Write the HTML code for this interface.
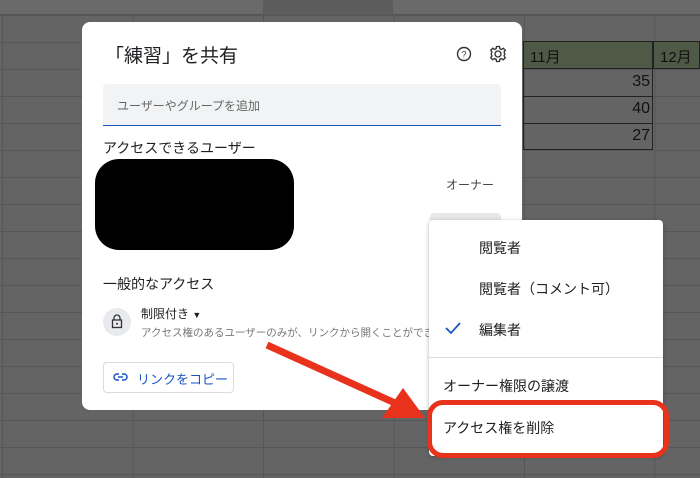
<!DOCTYPE html>
<html><head><meta charset="utf-8"><style>
*{margin:0;padding:0;box-sizing:border-box}
body{width:700px;height:478px;overflow:hidden;position:relative;background:#646464;font-family:"Liberation Sans","Noto Sans CJK JP",sans-serif;}
.grid{position:absolute;inset:0;background-image:linear-gradient(to bottom,#575757 1px,transparent 1px),linear-gradient(to right,#575757 1px,transparent 1px);background-size:100% 27px,130.5px 100%;background-position:0 15px,2px 0}
.abs{position:absolute}
</style></head><body>
<div class="grid"></div>
<div class="abs" style="left:0;top:0;width:700px;height:15px;background:#6a6a6a;border-bottom:1px solid #555"></div>
<div class="abs" style="left:263px;top:0;width:130px;height:15px;background:#5c5c5c"></div>
<div class="abs" style="left:523px;top:41px;width:130px;height:28px;background:#4e5a45;border:1px solid #222;color:#111;font-size:15px;padding:4px 0 0 6px">11月</div>
<div class="abs" style="left:653px;top:41px;width:47px;height:28px;background:#4e5a45;border:1px solid #222;color:#111;font-size:15px;padding:4px 0 0 6px">12月</div>
<div class="abs" style="left:523px;top:69px;width:130px;height:81px;border:1px solid #222;border-top:none"></div>
<div class="abs" style="left:523px;top:96px;width:130px;height:1px;background:#222"></div>
<div class="abs" style="left:523px;top:123px;width:130px;height:1px;background:#222"></div>
<div class="abs" style="left:600px;top:73px;width:50px;text-align:right;color:#111;font-size:16px">35</div>
<div class="abs" style="left:600px;top:100px;width:50px;text-align:right;color:#111;font-size:16px">40</div>
<div class="abs" style="left:600px;top:127px;width:50px;text-align:right;color:#111;font-size:16px">27</div>

<div class="abs" style="left:82px;top:22px;width:440px;height:388px;background:#fff;border-radius:8px"></div>
<div class="abs" style="left:105px;top:41px;font-size:19px;color:#202124">「練習」を共有</div>
<svg class="abs" style="left:455px;top:45px" width="18" height="18" viewBox="0 0 18 18"><circle cx="9" cy="9" r="6.5" fill="none" stroke="#333" stroke-width="1.4"/><text x="9" y="12.5" font-size="9" text-anchor="middle" fill="#333" font-family="Liberation Sans">?</text></svg>
<svg class="abs" style="left:489px;top:45px" width="18" height="18" viewBox="0 0 24 24"><path d="M12 8a4 4 0 100 8 4 4 0 000-8z M10 2h4l.5 3 2 1 2.5-1.7 2.8 2.8L20 9.5l1 2v1l-1 2 1.7 2.5-2.8 2.8L16.5 18l-2 1-.5 3h-4l-.5-3-2-1-2.5 1.7-2.8-2.8L4 14.5l-1-2v-1l1-2L2.3 7 5.1 4.2 7.5 6l2-1z" fill="none" stroke="#333" stroke-width="1.8"/></svg>
<div class="abs" style="left:103px;top:84px;width:398px;height:42px;background:#f1f3f4;border-radius:4px 4px 0 0;border-bottom:1.5px solid #1a56c4;font-size:12px;color:#666;padding:13px 0 0 14px">ユーザーやグループを追加</div>
<div class="abs" style="left:103px;top:138px;font-size:14px;color:#202124">アクセスできるユーザー</div>
<div class="abs" style="left:95px;top:159px;width:199px;height:91px;background:#000;border-radius:24px"></div>
<div class="abs" style="left:446px;top:176px;font-size:12px;color:#444">オーナー</div>
<div class="abs" style="left:430px;top:213px;width:71px;height:10px;background:#e8e8e8;border-radius:4px"></div>
<div class="abs" style="left:103px;top:274px;font-size:14px;color:#202124">一般的なアクセス</div>
<div class="abs" style="left:103px;top:308px;width:28px;height:28px;border-radius:50%;background:#e8eaed"></div>
<svg class="abs" style="left:110px;top:313px" width="14" height="16" viewBox="0 0 14 16"><path d="M4 7V5a3 3 0 016 0v2" fill="none" stroke="#333" stroke-width="1.3"/><rect x="2.5" y="7" width="9" height="7.5" fill="none" stroke="#333" stroke-width="1.3"/><circle cx="7" cy="10.8" r="1" fill="#333"/></svg>
<div class="abs" style="left:141px;top:305px;font-size:12px;color:#202124">制限付き <span style="font-size:9px">▼</span></div>
<div class="abs" style="left:141px;top:325px;font-size:10.5px;color:#777;white-space:nowrap;width:288px;overflow:hidden">アクセス権のあるユーザーのみが、リンクから開くことができます</div>
<div class="abs" style="left:103px;top:362px;width:131px;height:31px;border:1px solid #dadce0;border-radius:4px;font-size:13px;color:#1a56c4;padding:6px 0 0 33px">リンクをコピー</div>
<svg class="abs" style="left:113px;top:371px" width="15" height="12" viewBox="0 0 15 12"><path d="M6 3H4a3 3 0 000 6h2M9 3h2a3 3 0 010 6H9M5 6h5" fill="none" stroke="#1a56c4" stroke-width="1.5"/></svg>

<div class="abs" style="left:429px;top:220px;width:234px;height:236px;background:#fff;border-radius:4px;box-shadow:0 1px 4px rgba(0,0,0,.3)"></div>
<div class="abs" style="left:479px;top:238px;font-size:14px;color:#202124">閲覧者</div>
<div class="abs" style="left:479px;top:279px;font-size:14px;color:#202124">閲覧者（コメント可）</div>
<svg class="abs" style="left:444px;top:321px" width="18" height="14" viewBox="0 0 18 14"><path d="M2 7l5 5L16 2" fill="none" stroke="#1a56c4" stroke-width="1.8"/></svg>
<div class="abs" style="left:479px;top:320px;font-size:14px;color:#202124">編集者</div>
<div class="abs" style="left:429px;top:357px;width:234px;height:1px;background:#dadce0"></div>
<div class="abs" style="left:443px;top:376px;font-size:14px;color:#202124">オーナー権限の譲渡</div>
<div class="abs" style="left:443px;top:418px;font-size:14px;color:#202124">アクセス権を削除</div>
<div class="abs" style="left:427px;top:400px;width:242px;height:58px;border:5px solid #e8321c;border-radius:16px"></div>
<svg class="abs" style="left:0;top:0" width="700" height="478"><line x1="267" y1="345" x2="395" y2="403" stroke="#e8321c" stroke-width="7"/><polygon points="425,418 382,418 403,388" fill="#e8321c"/></svg>
</body></html>
